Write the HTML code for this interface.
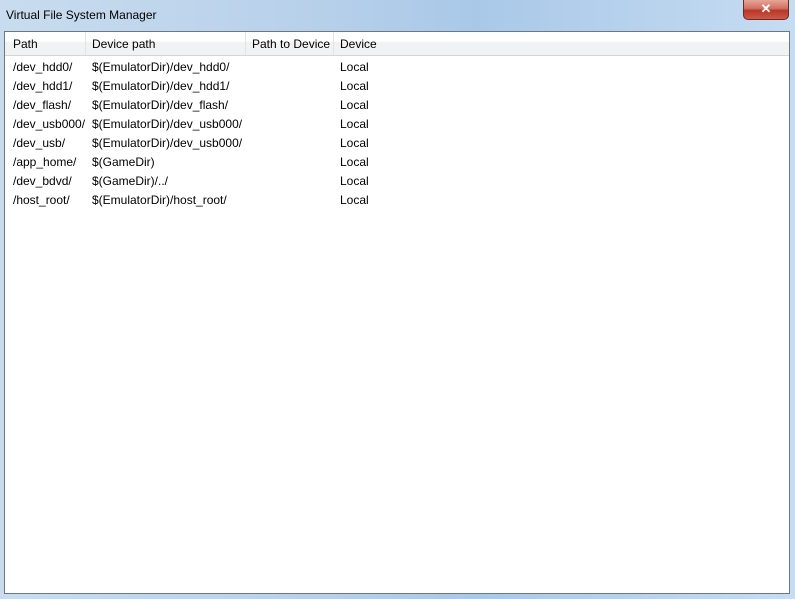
<!DOCTYPE html>
<html><head><meta charset="utf-8"><style>
*{margin:0;padding:0;box-sizing:border-box}
body{width:795px;height:599px;overflow:hidden;background:linear-gradient(90deg,#c9dcef 0%,#b7d0ea 40%,#a9c8e8 60%,#c6dcf2 100%);font-family:"Liberation Sans",sans-serif;font-size:12px;color:#000;position:relative}
.title{position:absolute;left:6px;top:8px;font-size:12px;color:#000}
.close{position:absolute;left:743px;top:0;width:46px;height:20px;border:1px solid #6d2a25;border-top:none;border-radius:0 0 5px 5px;background:linear-gradient(#e6a598 0%,#d0705f 45%,#b9352a 55%,#cd5a43 100%);color:#fff;text-align:center;font-weight:bold;font-size:13px;line-height:17px}
.panel{position:absolute;left:4px;top:31px;width:786px;height:563px;background:#fff;border:1px solid #6c7786}
.hdr{position:absolute;left:0;top:0;width:100%;height:24px;background:linear-gradient(#fff 0%,#fff 40%,#f1f2f4 45%,#f1f2f4 100%);border-bottom:1px solid #d5d5d5}
.hdr div{position:absolute;top:0;height:23px;line-height:24px;padding-left:6px;border-right:1px solid #e3e3e3}
.row{position:absolute;left:0;height:19px;line-height:19px;width:100%}
.row span{position:absolute}
</style></head><body>
<div class="title">Virtual File System Manager</div>
<div class="close">✕</div>
<div class="panel">
<div class="hdr">
<div style="left:2px;width:79px">Path</div>
<div style="left:81px;width:160px">Device path</div>
<div style="left:241px;width:88px">Path to Device</div>
<div style="left:329px;width:80px;border:none">Device</div>
</div>
<div class="row" style="top:26px"><span style="left:8px">/dev_hdd0/</span><span style="left:87px">$(EmulatorDir)/dev_hdd0/</span><span style="left:335px">Local</span></div>
<div class="row" style="top:45px"><span style="left:8px">/dev_hdd1/</span><span style="left:87px">$(EmulatorDir)/dev_hdd1/</span><span style="left:335px">Local</span></div>
<div class="row" style="top:64px"><span style="left:8px">/dev_flash/</span><span style="left:87px">$(EmulatorDir)/dev_flash/</span><span style="left:335px">Local</span></div>
<div class="row" style="top:83px"><span style="left:8px">/dev_usb000/</span><span style="left:87px">$(EmulatorDir)/dev_usb000/</span><span style="left:335px">Local</span></div>
<div class="row" style="top:102px"><span style="left:8px">/dev_usb/</span><span style="left:87px">$(EmulatorDir)/dev_usb000/</span><span style="left:335px">Local</span></div>
<div class="row" style="top:121px"><span style="left:8px">/app_home/</span><span style="left:87px">$(GameDir)</span><span style="left:335px">Local</span></div>
<div class="row" style="top:140px"><span style="left:8px">/dev_bdvd/</span><span style="left:87px">$(GameDir)/../</span><span style="left:335px">Local</span></div>
<div class="row" style="top:159px"><span style="left:8px">/host_root/</span><span style="left:87px">$(EmulatorDir)/host_root/</span><span style="left:335px">Local</span></div>
</div>
</body></html>
